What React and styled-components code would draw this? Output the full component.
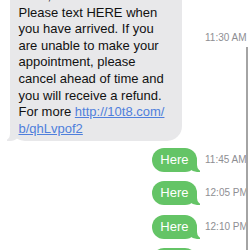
import React from "react";
import styled, { createGlobalStyle } from "styled-components";

const Global = createGlobalStyle`
    body {
        margin: 0;
        background: #ffffff;
        font-family: "Liberation Sans", Arial, sans-serif;
    }
`;

const Screen = styled.div`
    position: relative;
    width: 250px;
    height: 250px;
    overflow: hidden;
    background: #ffffff;
`;

const Thread = styled.div`
    display: flex;
    flex-direction: column;
    margin-top: -18px;
`;

const Row = styled.div`
    display: grid;
    grid-template-columns: 205px 1fr;
    align-items: center;
    margin-top: ${(p) => p.$space || 0}px;
`;

const Received = styled.div`
    position: relative;
    justify-self: start;
    box-sizing: border-box;
    width: 172px;
    margin-left: 10px;
    padding: 6px 0 4px 8.5px;
    background: #e8e8ea;
    border-radius: 15px;
    color: #111111;
    font-size: 13px;
    line-height: 16.6px;

    &::before {
        content: "";
        position: absolute;
        left: -3px;
        bottom: 0;
        width: 14px;
        height: 13px;
        background: #e8e8ea;
        border-bottom-right-radius: 11px;
    }
    &::after {
        content: "";
        position: absolute;
        left: -8px;
        bottom: 0;
        width: 8px;
        height: 13px;
        background: #ffffff;
        border-bottom-right-radius: 7px;
    }
`;

const Line = styled.span`
    position: relative;
    z-index: 1;
    display: block;
    white-space: nowrap;
`;

const Link = styled.span`
    color: #4f7fdc;
    text-decoration: underline;
    text-underline-offset: 1px;
`;

const Sent = styled.div`
    position: relative;
    justify-self: end;
    margin-right: 8px;
    padding: 4px 8.5px;
    background: #64c466;
    border-radius: 12px;
    color: #ffffff;
    font-size: 13px;
    line-height: 16px;

    &::before {
        content: "";
        position: absolute;
        right: -3px;
        bottom: 0;
        width: 13px;
        height: 12px;
        background: #64c466;
        border-bottom-left-radius: 10px;
    }
    &::after {
        content: "";
        position: absolute;
        right: -8px;
        bottom: 0;
        width: 8px;
        height: 12px;
        background: #ffffff;
        border-bottom-left-radius: 7px;
    }
`;

const SentText = styled.span`
    position: relative;
    z-index: 1;
`;

const Time = styled.span`
    align-self: ${(p) => (p.$top ? "start" : "center")};
    padding-top: ${(p) => (p.$top ? 50 : 0)}px;
    color: #8e8e93;
    font-size: 10px;
    line-height: 12px;
    white-space: nowrap;
`;

const Scrollbar = styled.div`
    position: absolute;
    left: 246px;
    top: 47px;
    bottom: 0;
    width: 2px;
    background: #a4a4a4;
`;

const sent = [
    { text: "Here", time: "11:45 AM", space: 7 },
    { text: "Here", time: "12:05 PM", space: 9 },
    { text: "Here", time: "12:10 PM", space: 9.5 },
    { text: "Here", time: "12:15 PM", space: 9 },
];

const App = () => {
    return (
        <Screen>
            <Global />
            <Thread>
                <Row>
                    <Received>
                        <Line>2020, 12:00 PM. Your</Line>
                        <Line>Please text HERE when</Line>
                        <Line>you have arrived. If you</Line>
                        <Line>are unable to make your</Line>
                        <Line>appointment, please</Line>
                        <Line>cancel ahead of time and</Line>
                        <Line>you will receive a refund.</Line>
                        <Line>For more <Link>http://10t8.com/</Link></Line>
                        <Line><Link>b/qhLvpof2</Link></Line>
                    </Received>
                    <Time $top>11:30 AM</Time>
                </Row>
                {sent.map((m, i) => (
                    <Row key={i} $space={m.space}>
                        <Sent><SentText>{m.text}</SentText></Sent>
                        <Time>{m.time}</Time>
                    </Row>
                ))}
            </Thread>
            <Scrollbar />
        </Screen>
    );
};

export default App;
